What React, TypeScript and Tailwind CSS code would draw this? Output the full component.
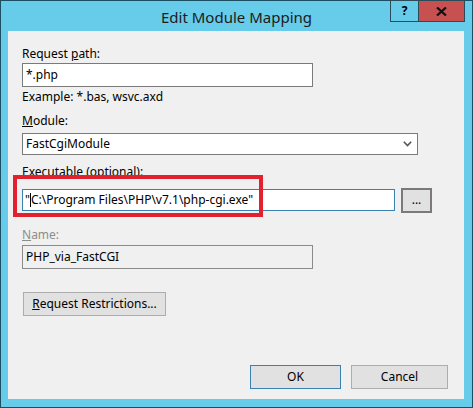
import { ReactNode } from "react";

const font = { fontFamily: '"Segoe UI", "Noto Sans", "Open Sans", sans-serif' };

function Label({ children, className = "" }: { children: ReactNode; className?: string }) {
    return <div className={"h-4 leading-4 text-[12px] text-black " + className}>{children}</div>;
}

function DlgButton({ children, className = "" }: { children: ReactNode; className?: string }) {
    return (
        <div
            className={
                "flex items-center justify-center bg-[#e1e1e1] border text-[12px] text-black " +
                className
            }
        >
            {children}
        </div>
    );
}

export default function App() {
    return (
        <div className="w-[473px] h-[408px] bg-white" style={font}>
            <div className="relative w-[473px] h-[408px] border border-[#1d4f62] bg-[#67cbea] flex flex-col">
                {/* title bar */}
                <div className="h-[30px] flex items-center justify-center text-[15px] text-[#1b1b1b] pt-[2px]">
                    Edit Module Mapping
                </div>
                <div className="absolute top-[-1px] left-[389px] flex">
                    <div className="w-[29px] h-[22px] border border-[#2a4b58] flex items-center justify-center text-[12px] font-bold text-black">
                        ?
                    </div>
                    <div className="w-[47px] h-[22px] -ml-px border border-[#2a4b58] bg-[#c75050] flex items-center justify-center">
                        <svg width="11" height="9" viewBox="0 0 11 9">
                            <path d="M1 0.5 L10 8.5 M10 0.5 L1 8.5" stroke="#111" strokeWidth="2.2" />
                        </svg>
                    </div>
                </div>

                {/* client area */}
                <div className="ml-[7px] w-[456px] h-[368px] bg-[#f0f0f0] flex flex-col pl-[14px] pt-[15px]">
                    <Label>
                        Request <span className="underline">p</span>ath:
                    </Label>
                    <div className="mt-px w-[291px] h-[24px] bg-white border border-[#7a7a7a] flex items-center px-[3px] text-[12px] text-black">
                        *.php
                    </div>
                    <Label className="mt-[2px]">Example: *.bas, wsvc.axd</Label>

                    <Label className="mt-[8px]">
                        <span className="underline">M</span>odule:
                    </Label>
                    <div className="mt-[4px] w-[396px] h-[22px] bg-white border border-[#7a7a7a] flex items-center justify-between px-[3px] text-[12px] text-black">
                        <span>FastCgiModule</span>
                        <svg width="9" height="6" viewBox="0 0 9 6" className="mr-[2px]">
                            <path d="M0.8 0.8 L4.5 4.6 L8.2 0.8" fill="none" stroke="#555" strokeWidth="1.6" />
                        </svg>
                    </div>

                    <Label className="mt-[9px]">
                        <span className="underline">E</span>xecutable (optional):
                    </Label>
                    <div className="relative mt-[7px] flex items-center gap-[6px]">
                        <div className="w-[373px] h-[22px] bg-white border border-[#3c7fb1] flex items-center px-[2px] text-[12px] text-black">
                            <span>"</span>
                            <span className="w-px h-[14px] bg-black" />
                            <span>C:\Program Files\PHP\v7.1\php-cgi.exe"</span>
                        </div>
                        <DlgButton className="w-[31px] h-[25px] border-[#7a7a7a] border-2 mt-[1px] pb-[2px]">...</DlgButton>
                        <div className="absolute left-[-9px] top-[-12px] w-[250px] h-[42px] border-[4px] border-[#e3202d]" />
                    </div>

                    <Label className="mt-[14px] text-[#8d8d8d]!">
                        <span className="underline">N</span>ame:
                    </Label>
                    <div className="mt-[2px] w-[291px] h-[24px] bg-[#f0f0f0] border border-[#8a8a8a] flex items-center px-[3px] text-[12px] text-black">
                        PHP_via_FastCGI
                    </div>

                    <DlgButton className="mt-[23px] ml-px w-[143px] h-[24px] border-[#adadad]">
                        <span>
                            <span className="underline">R</span>equest Restrictions...
                        </span>
                    </DlgButton>

                    <div className="mt-[49px] flex gap-[10px] pl-[228px]">
                        <DlgButton className="w-[91px] h-[24px] border-[#3c7fb1]">OK</DlgButton>
                        <DlgButton className="w-[97px] h-[24px] border-[#adadad]">Cancel</DlgButton>
                    </div>
                </div>
            </div>
        </div>
    );
}
